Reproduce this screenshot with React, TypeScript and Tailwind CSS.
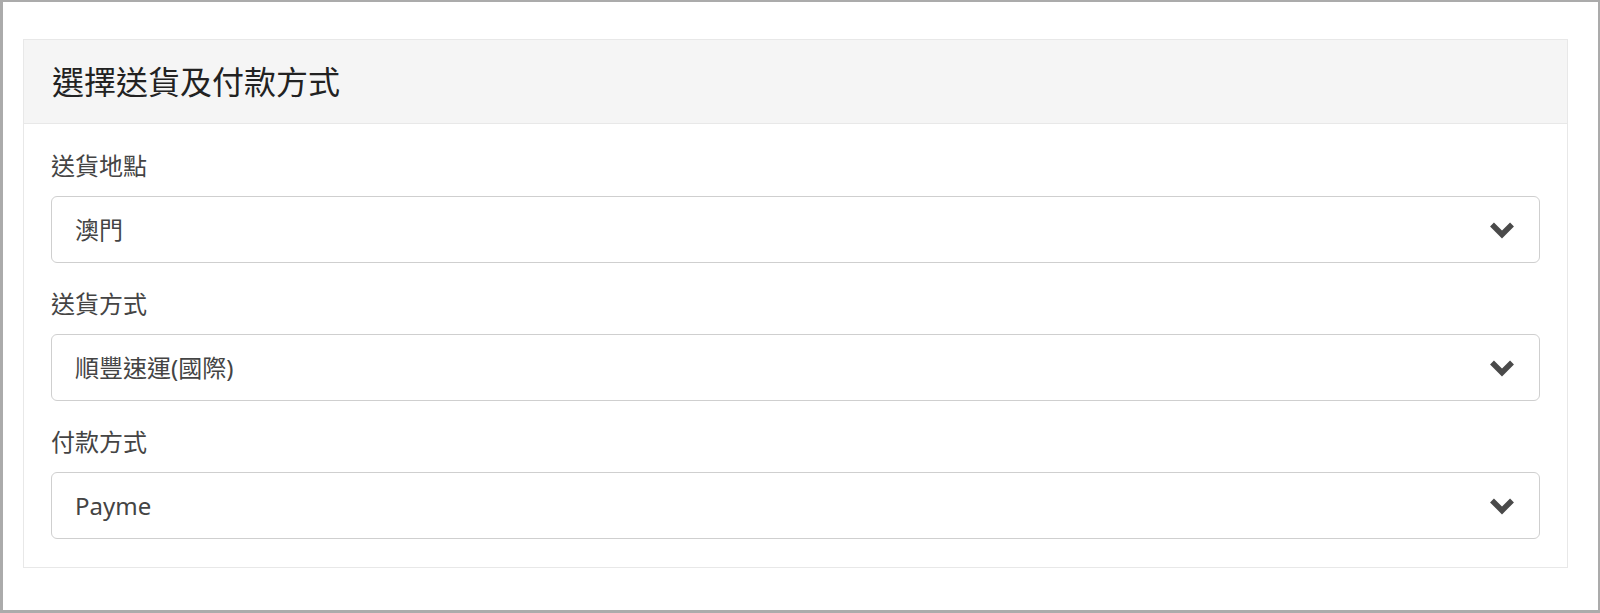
const fontStack = "font-['Noto_Sans','Noto_Sans_CJK_TC',sans-serif]";

const Chevron = () => (
  <svg width="26" height="18" viewBox="0 0 26 18" className="shrink-0">
    <polyline points="3,3.5 13,13.5 23,3.5" fill="none" stroke="#4a4a4a" strokeWidth="5.5" strokeLinecap="butt" strokeLinejoin="miter" />
  </svg>
);

const SelectField = ({ label, value, last }: { label: string; value: string; last?: boolean }) => (
  <div className={last ? "" : "mb-[23px]"}>
    <div className="text-[24px] leading-[36px] text-[#444] mb-[12px]">{label}</div>
    <div className="h-[67px] flex items-center justify-between border border-[#cfcfcf] rounded-[6px] pl-[23px] pr-[24px] bg-white">
      <span className="text-[24px] leading-none text-[#444]">{value}</span>
      <Chevron />
    </div>
  </div>
);

const App = () => {
  return (
    <div className={`${fontStack} w-[1600px] h-[613px] bg-white border-t-2 border-r-2 border-b-[3px] border-l-[3px] border-[#ababab] pt-[37px] pl-[20px] pr-[30px]`}>
      <div className="border border-[#e8e8e8]">
        <div className="h-[84px] bg-[#f5f5f5] border-b border-[#e8e8e8] flex items-center pl-[28px]">
          <h1 className="text-[32px] leading-none text-[#222] font-normal">選擇送貨及付款方式</h1>
        </div>
        <div className="pt-[24px] pb-[28px] px-[27px]">
          <SelectField label="送貨地點" value="澳門" />
          <SelectField label="送貨方式" value="順豐速運(國際)" />
          <SelectField label="付款方式" value="Payme" last />
        </div>
      </div>
    </div>
  );
};

export default App;
